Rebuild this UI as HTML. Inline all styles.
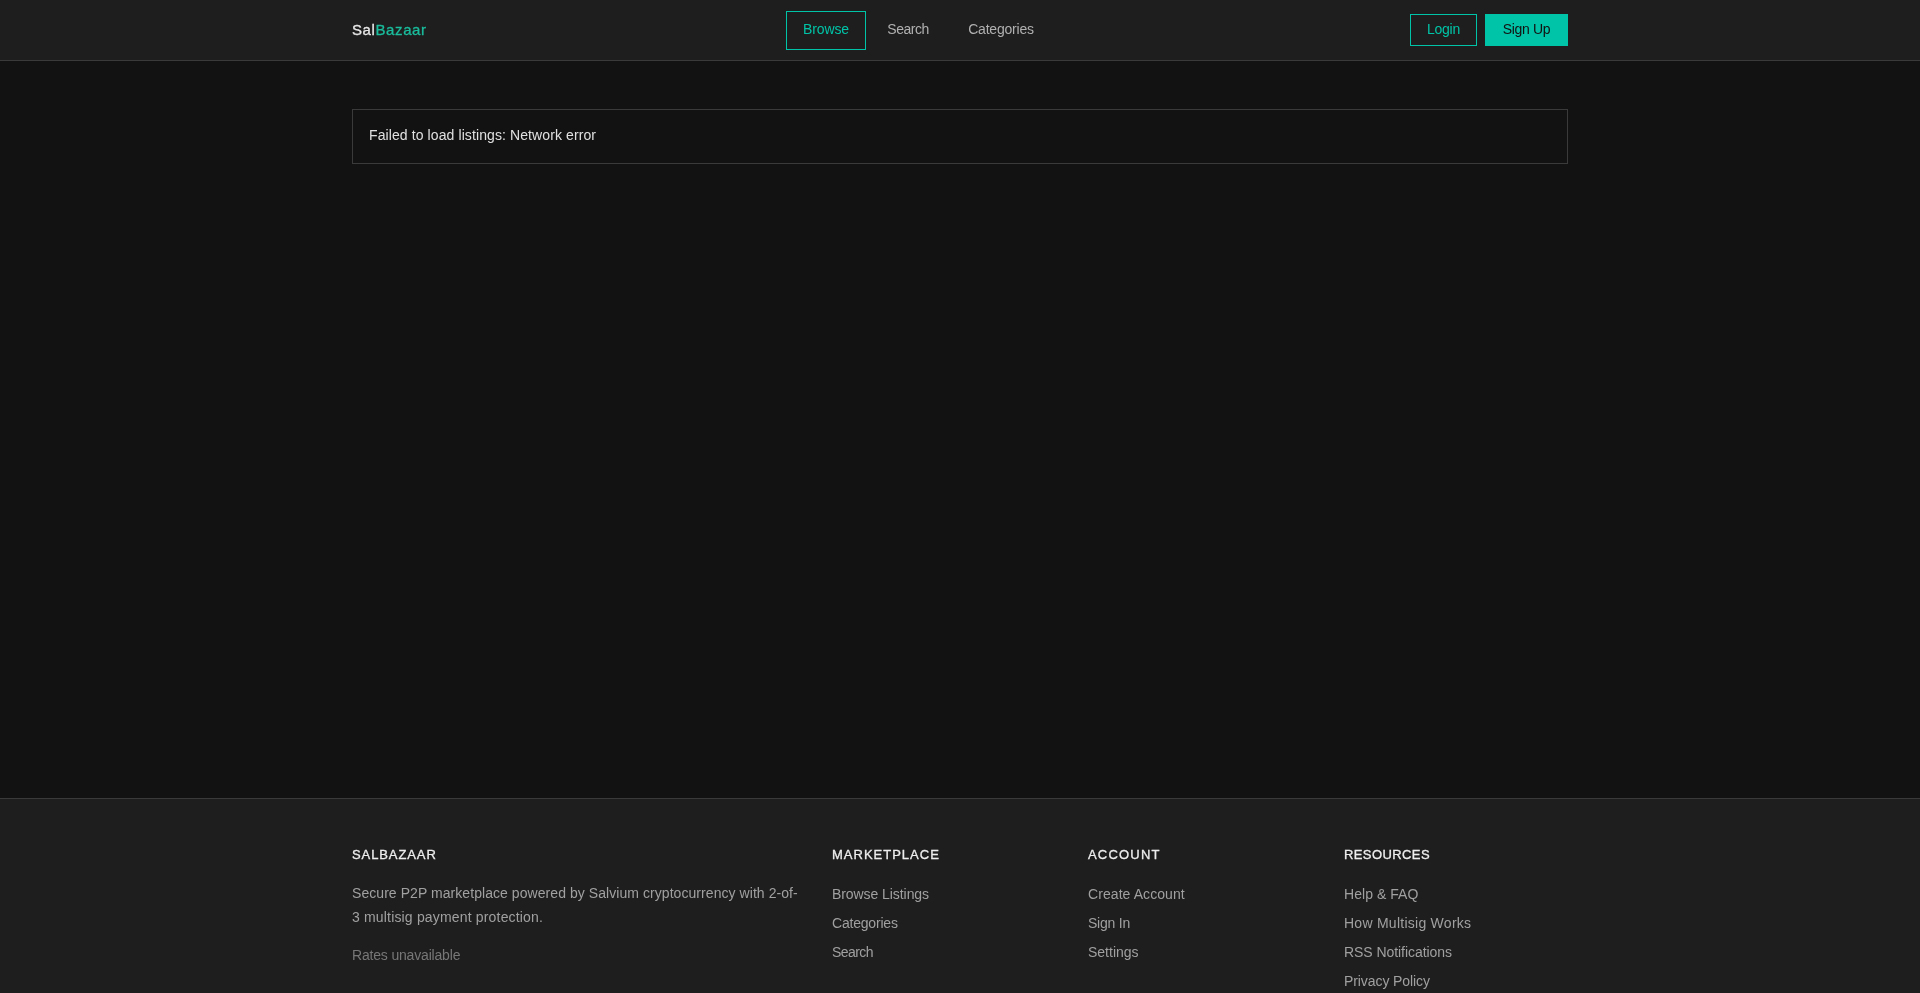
<!DOCTYPE html>
<html><head><meta charset="utf-8">
<title>SalBazaar</title>
<style>
*{box-sizing:border-box;margin:0;padding:0}
html,body{background:#121212;color:#e0e0e0;font-family:"Liberation Sans",sans-serif;font-size:14px;line-height:1.5;overflow:hidden;height:993px}
a{color:inherit;text-decoration:none}
.header{background:#1e1e1e;border-bottom:1px solid #3a3a3a;height:61px}
.container{width:1216px;margin:0 auto}
.hdr{position:relative;height:60px}
.hdr a{position:absolute;display:block;white-space:nowrap;text-align:center}
.logo{left:0;top:18.5px;font-size:15px;line-height:22px;font-weight:normal;-webkit-text-stroke:0.3px currentColor;letter-spacing:0.6px;color:#e8e8e8;text-align:left!important}
.logo .b{color:#1abc9c}
.nav{top:11px;height:39px;padding-top:7px;line-height:21px;border:1px solid transparent;color:#b0b0b0}
.nav.active{border-color:#00c4a7;color:#00c4a7}
.btn{top:14px;height:32px;padding-top:4px;line-height:21px;border:1px solid #00c4a7;color:#00c4a7}
.btn.primary{background:#00c4a7;border-color:#00c4a7;color:#121212}
.main{height:737px;padding-top:48px}
.err{border:1px solid #3a3a3a;padding:15px 16px 17px;color:#e0e0e0}
.footer{background:#1e1e1e;border-top:1px solid #3a3a3a;padding-top:45px;height:195px;overflow:hidden}
.grid{display:grid;grid-template-columns:2fr 1fr 1fr 1fr;gap:32px}
.footer h4{font-size:13px;line-height:21px;font-weight:normal;-webkit-text-stroke:0.3px currentColor;letter-spacing:1px;text-transform:uppercase;margin-bottom:16px;color:#eeeeee}
.footer p{color:#a0a0a0;line-height:1.7}
.footer .desc{padding-top:1px}
.footer .rates{color:#777;margin-top:14px}
.footer ul{list-style:none;padding-top:3px}
.footer li{margin-bottom:8px}
.footer li a{color:#a0a0a0}
.aa{will-change:transform}
</style></head><body>
<div class="header aa"><div class="container hdr">
<a class="logo" href="#">Sal<span class="b">Bazaar</span></a>
<a class="nav active" href="#" style="left:434px;width:80px;letter-spacing:-0.12px">Browse</a>
<a class="nav" href="#" style="left:516px;width:80px;letter-spacing:-0.5px">Search</a>
<a class="nav" href="#" style="left:599px;width:100px;letter-spacing:-0.2px">Categories</a>
<a class="btn" href="#" style="left:1058px;width:67px;letter-spacing:-0.25px">Login</a>
<a class="btn primary" href="#" style="left:1133px;width:83px;letter-spacing:-0.33px">Sign Up</a>
</div></div>
<div class="main aa"><div class="container"><div class="err" style="letter-spacing:0.1px">Failed to load listings: Network error</div></div></div>
<div class="footer aa"><div class="container grid">
<div><h4 style="letter-spacing:0.9px">SalBazaar</h4><p class="desc"><span style="letter-spacing:0.06px">Secure P2P marketplace powered by Salvium cryptocurrency with 2-of-</span><br><span style="letter-spacing:0.17px">3 multisig payment protection.</span></p><p class="rates" style="letter-spacing:-0.18px">Rates unavailable</p></div>
<div><h4 style="letter-spacing:1px">Marketplace</h4><ul><li><a href="#" style="letter-spacing:-0.07px">Browse Listings</a></li><li><a href="#" style="letter-spacing:-0.2px">Categories</a></li><li><a href="#" style="letter-spacing:-0.56px">Search</a></li></ul></div>
<div><h4 style="letter-spacing:1.2px">Account</h4><ul><li><a href="#" style="letter-spacing:0.077px">Create Account</a></li><li><a href="#" style="letter-spacing:-0.22px">Sign In</a></li><li><a href="#" style="letter-spacing:0px">Settings</a></li></ul></div>
<div><h4 style="letter-spacing:0.4px">Resources</h4><ul><li><a href="#" style="letter-spacing:0.05px">Help &amp; FAQ</a></li><li><a href="#" style="letter-spacing:0.26px">How Multisig Works</a></li><li><a href="#" style="letter-spacing:-0.056px">RSS Notifications</a></li><li><a href="#" style="letter-spacing:-0.085px">Privacy Policy</a></li></ul></div>
</div></div>
</body></html>
